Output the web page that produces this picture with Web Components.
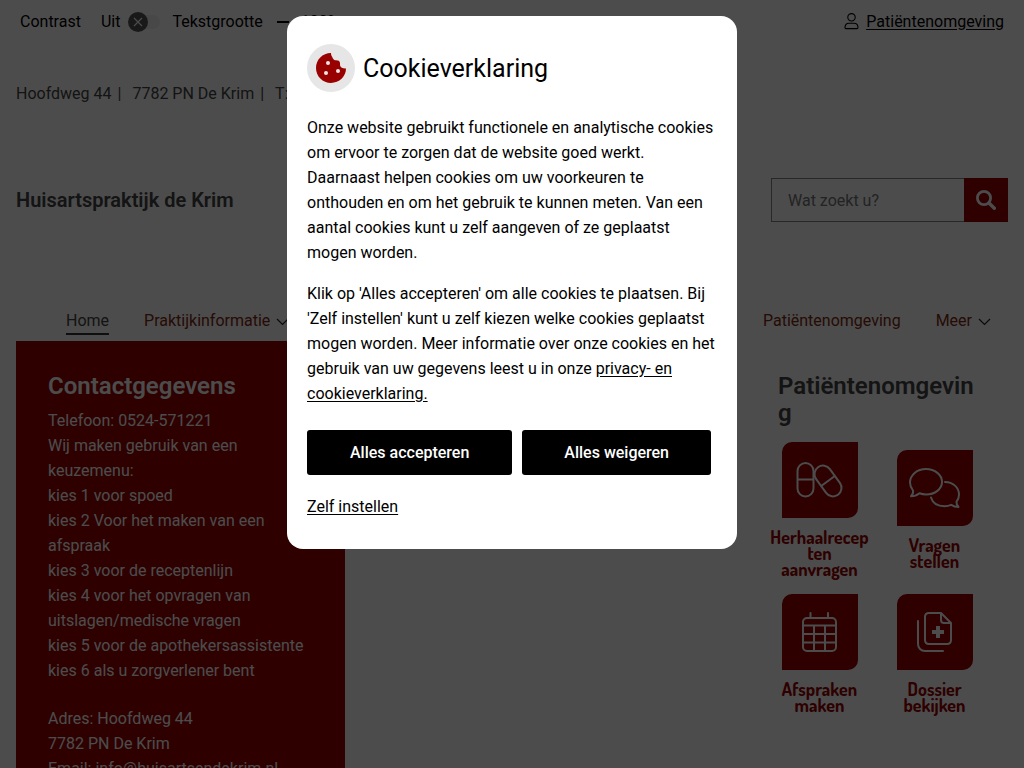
<!DOCTYPE html>
<html lang="nl">
<head>
<meta charset="utf-8">
<meta name="viewport" content="width=device-width, initial-scale=1">
<title>Huisartspraktijk de Krim</title>
<style>
html, body { height: 100%; }
body { margin: 0; overflow: hidden; background: #fff; color: #444; font: 16px/25px Roboto, "Liberation Sans", sans-serif; }
</style>
</head>
<body>
<practice-page></practice-page>
<cookie-dialog></cookie-dialog>
<script>
function define(name, html) {
  const template = document.createElement('template');
  template.innerHTML = html;
  customElements.define(name, class extends HTMLElement {
    constructor() {
      super();
      this.attachShadow({ mode: 'open' }).append(template.content.cloneNode(true));
    }
  });
}

define('top-bar', `
<style>
:host { display: flex; justify-content: space-between; align-items: center; height: 43px; padding: 0 20px; color: #000; }
.tools { display: flex; align-items: center; }
.tools label { display: flex; align-items: center; gap: 8px; margin: 0 12px 0 20px; }
.switch { position: relative; display: flex; align-items: center; width: 32px; height: 20px; }
.switch input { appearance: none; margin: 0 0 0 6px; width: 28px; height: 14px; border-radius: 7px; background: #f0f0f0; }
.switch svg { position: absolute; left: 0; top: 0; pointer-events: none; }
.size { display: flex; align-items: center; gap: 12px; margin-left: 14px; }
button { border: 0; background: none; padding: 0; font: inherit; color: inherit; display: flex; }
a { display: flex; align-items: center; gap: 7px; color: inherit; text-underline-offset: 2px; }
</style>
<div class="tools">
  <span>Contrast</span>
  <label>Uit
    <span class="switch"><input type="checkbox" role="switch">
      <svg width="20" height="20" viewBox="0 0 20 20"><circle cx="10" cy="10" r="10" fill="#555"/><path d="M6 6l8 8M14 6l-8 8" stroke="#fff" stroke-width="1.1"/></svg>
    </span>
  </label>
  <span>Tekstgrootte</span>
  <div class="size">
    <button aria-label="Kleiner"><svg width="12" height="12" viewBox="0 0 12 12"><path d="M0 6h12" stroke="#000" stroke-width="2"/></svg></button>
    <span>100%</span>
  </div>
</div>
<a href="#"><svg width="15" height="17" viewBox="0 0 15 17" fill="none" stroke="#000" stroke-width="1.1"><circle cx="7.5" cy="4.3" r="3.7"/><path d="M1 14.7C1 11.500 2.6 10.300 5 10.300h5c2.400 0 4 1.200 4 4.400 0 .6-.4.900-1 .900H2c-.6 0-1-.3-1-.9z"/></svg><u>Patiëntenomgeving</u></a>
`);

define('address-line', `
<style>
:host { display: flex; padding: 38px 0 0 16px; }
i { font-style: normal; margin: 0 11px 0 6px; }
</style>
<span>Hoofdweg 44</span><i>|</i><span>7782 PN De Krim</span><i>|</i><span>T: 0524-571221</span>
`);

define('site-search', `
<style>
:host { display: block; width: 237px; }
form { display: flex; height: 44px; margin: 0; }
input { flex: 1; min-width: 0; box-sizing: border-box; border: 1px solid #888; border-right: 0; padding: 0 16px; font: inherit; background: #fff; border-radius: 0; }
input::placeholder { color: #757575; opacity: 1; }
button { width: 44px; border: 0; padding: 0; background: #900; display: grid; place-items: center; }
</style>
<form role="search"><input type="search" placeholder="Wat zoekt u?" aria-label="Zoeken"><button type="button" aria-label="Zoek">
<svg width="20" height="20" viewBox="0 0 20 20" fill="none" stroke="#fff"><circle cx="8" cy="8" r="6.600" stroke-width="2.800"/><path d="M13 13l5.300 5.300" stroke-width="3.400" stroke-linecap="round"/></svg></button></form>
`);

define('nav-item', `
<style>
:host { display: flex; align-items: center; gap: 6px; color: #802a10; }
a { color: inherit; text-decoration: none; border-bottom: 2px solid transparent; }
svg { display: none; }
:host([menu]) svg { display: block; }
:host([current]) { color: #444; }
:host([current]) a { border-color: #333; }
</style>
<a href="#"><slot></slot></a>
<svg width="13" height="8" viewBox="0 0 13 8" fill="none" stroke="#222" stroke-width="1.200"><path d="M1 1l5.500 5.500L12 1"/></svg>
`);

define('main-nav', `
<style>
:host { display: flex; gap: 35px; height: 33px; padding: 0 17px 0 50px; align-items: flex-start; }
.push { margin-left: auto; }
</style>
<nav-item current>Home</nav-item><nav-item menu>Praktijkinformatie</nav-item><nav-item class="push">Patiëntenomgeving</nav-item><nav-item menu>Meer</nav-item>
`);

define('contact-panel', `
<style>
:host { display: block; background: #900; color: #fff; padding: 32px 32px; box-sizing: border-box; }
h2 { margin: 0 0 9px; font-size: 24px; line-height: 26px; font-weight: 600; }
p { margin: 0 0 23px; }
a { color: inherit; text-decoration: none; }
</style>
<h2>Contactgegevens</h2>
<p>Telefoon: 0524-571221<br>Wij maken gebruik van een keuzemenu:<br>kies 1 voor spoed<br>kies 2 Voor het maken van een afspraak<br>kies 3 voor de receptenlijn<br>kies 4 voor het opvragen van uitslagen/medische vragen<br>kies 5 voor de apothekersassistente<br>kies 6 als u zorgverlener bent</p>
<p>Adres: Hoofdweg 44<br>7782 PN De Krim<br>Email: <a href="#">info@huisartsendekrim.nl</a></p>
`);

define('portal-tile', `
<style>
:host { display: block; width: 102px; }
a { display: flex; flex-direction: column; align-items: center; gap: 11px; color: #900; text-decoration: none; font: 700 18px/16px Dosis, "Noto Sans", Roboto, sans-serif; text-align: center; }
.icon { width: 76px; height: 76px; background: #900; border-radius: 10px 0 10px 0; }
.label { width: 102px; overflow-wrap: anywhere; }
</style>
<a href="#"><span class="icon"><slot name="icon"></slot></span><span class="label"><slot></slot></span></a>
`);

define('patient-portal', `
<style>
:host { display: block; padding: 32px 16px 0 0; }
h2 { margin: 0 0 15px; padding: 0 16px; font-size: 24px; line-height: 27px; font-weight: 600; color: #444; overflow-wrap: anywhere; }
.tiles { display: grid; grid-template-columns: 1fr 1fr; gap: 17px 0; justify-items: center; align-items: center; }
svg { display: block; fill: none; stroke: #fff; stroke-width: 2; stroke-linecap: round; stroke-linejoin: round; }
</style>
<h2>Patiëntenomgeving</h2>
<div class="tiles">
<portal-tile><svg slot="icon" width="76" height="76" viewBox="0 0 76 76"><rect x="15.500" y="21" width="16" height="33.500" rx="8"/><path d="M16 37.500h15"/><g transform="rotate(-36 46 39)"><rect x="37.500" y="22" width="17" height="34" rx="8.500"/><path d="M38 39h16"/></g></svg>Herhaalrecep<wbr>ten aanvragen</portal-tile>
<portal-tile><svg slot="icon" width="76" height="76" viewBox="0 0 76 76"><path d="M16 40.500c-2-2.500-3-5-3-8 0-7.500 7-13.500 16-13.500s16 6 16 13-7 12.500-16 12.500c-2.500 0-4.500-.4-6.500-1.200-2.500 2-5.500 3-8.500 3 1.500-1.500 2.500-3.500 2-5.800zM48 32c8 0 14 5.500 14 12.500 0 2.800-1 5.300-2.500 7.200-.2 2 .6 3.800 2 5.300-2.700-.1-5.200-.8-7.300-2.200-2 .9-4.200 1.400-6.700 1.400-7 0-12-3.500-13.500-8.700"/></svg>Vragen<br>stellen</portal-tile>
<portal-tile><svg slot="icon" width="76" height="76" viewBox="0 0 76 76"><rect x="21" y="24" width="33" height="33" rx="4"/><path d="M21 31.500h33M21 40h33M21 48.500h33M32 31.500V57M43 31.500V57M28.500 19v5M46 19v5"/></svg>Afspraken maken</portal-tile>
<portal-tile><svg slot="icon" width="76" height="76" viewBox="0 0 76 76"><path d="M44 19H32c-2.500 0-4 1.500-4 4v23c0 2.500 1.500 4 4 4h18c2.500 0 4-1.500 4-4V29zM44 19v7c0 2 1 3 3 3h7M21 27v23c0 4 3 7 7 7h18"/><path d="M41 32v12M35 38h12" stroke-width="4" stroke-linecap="butt"/></svg>Dossier bekijken</portal-tile>
</div>
`);

define('practice-page', `
<style>
:host { display: block; }
.wrap { padding: 0 16px; }
.brand { display: flex; justify-content: space-between; align-items: center; margin: 72px 0 86px; }
.brand strong { font-size: 20px; font-weight: 600; }
.columns { display: grid; grid-template-columns: 329fr 417fr 246fr; align-items: start; }
.portal { grid-column: 3; }
</style>
<top-bar></top-bar>
<address-line></address-line>
<div class="wrap">
  <div class="brand"><strong>Huisartspraktijk de Krim</strong><site-search></site-search></div>
  <main-nav></main-nav>
  <div class="columns"><contact-panel></contact-panel><patient-portal class="portal"></patient-portal></div>
</div>
`);

define('cookie-dialog', `
<style>
:host { position: fixed; inset: 0; display: flex; justify-content: center; align-items: flex-start; padding: 16px; background: rgba(0,0,0,.7); color: #000; }
section { box-sizing: border-box; width: 100%; max-width: 450px; padding: 28px 20px 30px; border-radius: 16px; background: #fff; }
header { display: flex; align-items: center; gap: 8px; margin-bottom: 23px; }
h1 { margin: 0; font-size: 25px; line-height: 33px; font-weight: 400; }
.badge { display: grid; place-items: center; width: 48px; height: 48px; border-radius: 50%; background: #e6e6e6; }
p { margin: 0 0 16px; }
a { color: inherit; text-underline-offset: 2px; }
.actions { display: flex; gap: 10px; margin: 24px 0 19px; }
button { height: 45px; border: 0; border-radius: 3px; background: #000; color: #fff; font: 500 16px/25px Roboto, sans-serif; padding: 0 43px; }
button + button { padding: 0 42px; }
</style>
<section role="dialog" aria-labelledby="title">
<header><span class="badge"><svg width="30" height="30" viewBox="0 0 30 30"><path d="M15 0C6.500 0 0 6.700 0 15s6.700 15 15 15 15-6.500 15-14.400c-3 .2-5.500-1-6-3.300.2-1.800 0-3.300-1-4.300-1.200-.7-2.500-.5-4-.7-1.500-.8-2.500-2-2.700-3.300-.8-.9-1.300-2.500-1.300-4z" fill="#900"/><g fill="#e6e6e6"><circle cx="12" cy="10" r="2"/><circle cx="10" cy="20" r="2"/><circle cx="22" cy="18" r="2"/></g></svg></span><h1 id="title">Cookieverklaring</h1></header>
<p>Onze website gebruikt functionele en analytische cookies om ervoor te zorgen dat de website goed werkt. Daarnaast helpen cookies om uw voorkeuren te onthouden en om het gebruik te kunnen meten. Van een aantal cookies kunt u zelf aangeven of ze geplaatst mogen worden.</p>
<p>Klik op 'Alles accepteren' om alle cookies te plaatsen. Bij 'Zelf instellen' kunt u zelf kiezen welke cookies geplaatst mogen worden. Meer informatie over onze cookies en het gebruik van uw gegevens leest u in onze <a href="#">privacy- en cookieverklaring.</a></p>
<div class="actions"><button>Alles accepteren</button><button>Alles weigeren</button></div>
<a href="#">Zelf instellen</a>
</section>
`);
</script>
</body>
</html>
